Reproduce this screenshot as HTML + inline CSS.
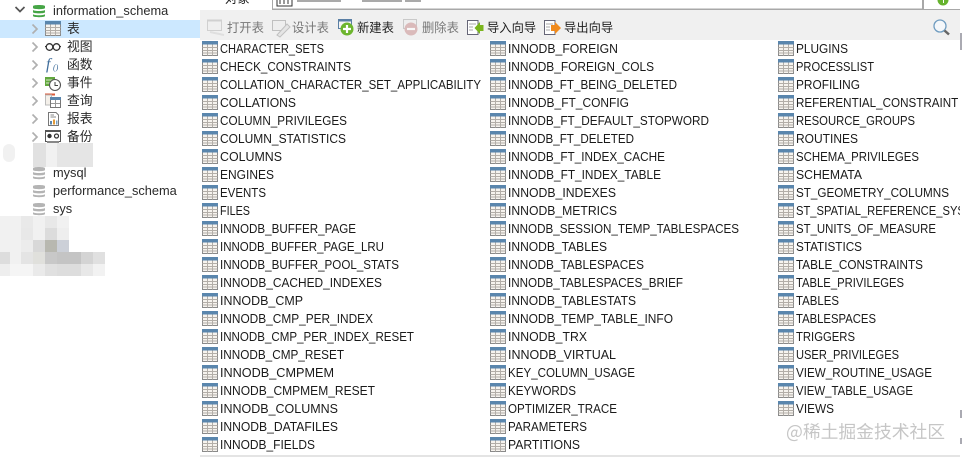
<!DOCTYPE html>
<html><head><meta charset="utf-8"><title>Navicat</title>
<style>
html,body{margin:0;padding:0;background:#fff;width:962px;height:457px;overflow:hidden}
svg{display:block}
text{font-family:"Liberation Sans","Noto Sans CJK SC",sans-serif;fill:#222}
.t text{font-size:12.8px;fill:#1a1a1a}
.s text{font-size:12.8px;fill:#2a2a2a}
.c{font-family:"Noto Sans CJK SC",sans-serif!important;font-size:12.3px}
</style></head><body>
<svg width="962" height="457" viewBox="0 0 962 457" xmlns="http://www.w3.org/2000/svg">
<defs>
<symbol id="t" viewBox="0 0 16 15" width="16" height="15">
<rect x=".5" y=".5" width="15" height="14" fill="#f6f3ee" stroke="#8a8a8a"/>
<rect x="0" y="0" width="16" height="3.5" fill="#5a86ad"/>
<path d="M.5 6.5H15.5M.5 9.5H15.5M.5 12H15.5M5.5 3.5V14.5M10.5 3.5V14.5" stroke="#b3aea8" stroke-width="1" fill="none"/>
</symbol>
<symbol id="d" viewBox="0 0 12 14" width="12" height="14">
<path d="M0 2.2C0 .6 12 .6 12 2.2V4C12 5.6 0 5.6 0 4ZM0 6C2 7.4 10 7.4 12 6V8.2C12 9.7 0 9.7 0 8.2ZM0 10.2C2 11.6 10 11.6 12 10.2V12C12 13.6 0 13.6 0 12Z" fill="currentColor"/>
</symbol>
<symbol id="a" viewBox="0 0 8 12" width="8" height="12">
<path d="M1.5 1.5L6 6L1.5 10.5" fill="none" stroke="#b0b0b0" stroke-width="1.7"/>
</symbol>
<clipPath id="cl"><rect x="0" y="0" width="960" height="457"/></clipPath>
<clipPath id="cr"><rect x="0" y="0" width="958" height="457"/></clipPath>
</defs>

<!-- top -->
<rect width="962" height="457" fill="#fff"/>
<text x="225" y="3" class="c">对象</text>
<rect x="272.500" y="-3" width="650" height="12" fill="#fff" stroke="#a8a8a8"/>
<rect x="277" y="-3" width="15" height="9" fill="#fff" stroke="#333"/>
<path d="M280 -1V4M284 -1V4M288 -1V4" stroke="#333"/>
<g fill="#aaa"><rect x="297" y="0" width="44" height="2"/><rect x="362" y="0" width="40" height="2"/><rect x="405" y="0" width="16" height="2"/></g>
<path d="M272 9.500H960" stroke="#a8a8a8"/>
<path d="M923.500 0V9" stroke="#a8a8a8"/>
<circle cx="943" cy="0" r="5.500" fill="#66b32e"/>
<rect x="943" y="0" width="1" height="3" fill="#fff"/>

<!-- toolbar -->
<rect x="200" y="10" width="760" height="30" fill="#f0f0f0"/>
<g opacity=".45">
<rect x="207.500" y="20.500" width="14" height="10" fill="#eee" stroke="#aaa"/>
<path d="M207 20.500H222" stroke="#aaa" stroke-width="2"/>
<path d="M210 32L224 35" stroke="#ccc" stroke-width="2"/>
</g>
<text x="227" y="32" class="c" style="fill:#777">打开表</text>
<g opacity=".55">
<rect x="272.500" y="20.500" width="13" height="10" fill="#eee" stroke="#999"/>
<path d="M277 35L287 24L290 27L280 37Z" fill="#ddd" stroke="#999"/>
</g>
<text x="292" y="32" class="c" style="fill:#777">设计表</text>
<rect x="338.500" y="19.500" width="13" height="9" fill="#f4f4f4" stroke="#5a7fa5"/>
<path d="M338 20.500H352" stroke="#5a7fa5" stroke-width="2"/>
<circle cx="347" cy="29" r="6.500" fill="#6db52e"/>
<path d="M343 29H351M347 25V33" stroke="#fff" stroke-width="2.200"/>
<text x="357" y="32" class="c" style="fill:#1e1e1e">新建表</text>
<g opacity=".55">
<rect x="403.500" y="19.500" width="13" height="9" fill="#eee" stroke="#aaa"/>
<circle cx="411" cy="29" r="6.500" fill="#c98f8f"/>
<path d="M407 29H415" stroke="#fff" stroke-width="2.200"/>
</g>
<text x="422" y="32" class="c" style="fill:#777">删除表</text>
<path d="M467.500 20.500H478V34.500H467.500Z" fill="#fff" stroke="#667"/>
<path d="M469 24H476M469 27H473M469 30H473" stroke="#aaa"/>
<path d="M480 22V25H483.500V31H480V34L474.500 28Z" fill="#7ab51d"/>
<text x="487" y="32" class="c" style="fill:#1e1e1e">导入向导</text>
<path d="M544.500 20.500H555V34.500H544.500Z" fill="#fff" stroke="#667"/>
<path d="M546 24H553M546 27H550M546 30H550" stroke="#aaa"/>
<path d="M555 22L561 28L555 34V31H551V25H555Z" fill="#f08a1d"/>
<text x="564" y="32" class="c" style="fill:#1e1e1e">导出向导</text>
<circle cx="940" cy="26" r="6" fill="#f4f7fa" stroke="#6f9cc0" stroke-width="1.300"/>
<path d="M944.500 30.500L949 34.500" stroke="#666" stroke-width="2.500"/>

<!-- sidebar -->
<rect x="0" y="20" width="200" height="18" fill="#cce8ff"/>
<path d="M15.500 7L20 11.500L24.500 7" fill="none" stroke="#555" stroke-width="1.700"/>
<use href="#a" x="31" y="23"/><use href="#a" x="31" y="41"/><use href="#a" x="31" y="59"/><use href="#a" x="31" y="77"/><use href="#a" x="31" y="95"/><use href="#a" x="31" y="113"/><use href="#a" x="31" y="131"/>
<use href="#d" x="33" y="4" style="color:#46a546"/>
<use href="#d" x="33" y="166" style="color:#b4b4b4"/>
<use href="#d" x="33" y="184" style="color:#b4b4b4"/>
<use href="#d" x="33" y="202" style="color:#b4b4b4"/>
<use href="#t" x="45" y="21"/>
<circle cx="49.500" cy="47" r="3.300" fill="none" stroke="#333" stroke-width="1.300"/>
<circle cx="56.500" cy="47" r="3.300" fill="none" stroke="#333" stroke-width="1.300"/>
<path d="M45 46.500H46M53 46.500H53.500M60 46.500H61" stroke="#333"/>
<text x="46" y="69" style="font-family:'Liberation Serif',serif;font-style:italic;font-size:16px;fill:#3f6d9b">f</text>
<text x="53" y="70" style="font-family:'Liberation Serif',serif;font-style:italic;font-size:8px;fill:#3f6d9b">()</text>
<path d="M45 77H55V86H45Z" fill="#62a83e"/>
<path d="M46 80H54M46 83H54" stroke="#d6e8c6"/>
<circle cx="55" cy="85" r="5.500" fill="#fff" stroke="#555" stroke-width="1.100"/>
<path d="M55 82V85.500H58" fill="none" stroke="#444"/>
<path d="M45 94.500H55" stroke="#d95a3a" stroke-width="2"/>
<rect x="45.500" y="95" width="6" height="10" fill="#f4f0ea" stroke="#bbb"/>
<rect x="50.500" y="97.500" width="10" height="10" fill="#fff" stroke="#777"/>
<rect x="50" y="97" width="11" height="3" fill="#5a86ad"/>
<path d="M55.500 100V107M51 103.500H60" stroke="#999"/>
<path d="M48.500 112.500H56L58.500 115V125.500H48.500Z" fill="#fff" stroke="#777"/>
<path d="M50.500 115H54M50.500 117H56" stroke="#888"/>
<rect x="50" y="121" width="2" height="3.500" fill="#5a86ad"/><rect x="53" y="119.500" width="2" height="5" fill="#e09a3a"/><rect x="56" y="120.500" width="1.500" height="4" fill="#7aa0c0"/>
<rect x="45.500" y="130.500" width="15" height="11" fill="#fff" stroke="#555"/>
<rect x="45" y="130" width="16" height="2" fill="#555"/>
<circle cx="49.500" cy="136" r="2.200" fill="#333"/><circle cx="56.500" cy="136" r="2" fill="none" stroke="#333" stroke-width="1.200"/>
<rect x="47" y="141" width="12" height="2.500" fill="#888"/>

<g class="s">
<text x="53" y="15">information_schema</text>
<text x="53" y="177">mysql</text>
<text x="53" y="195">performance_schema</text>
<text x="53" y="213">sys</text>
<text x="67" y="33" class="c">表</text>
<text x="67" y="51" class="c">视图</text>
<text x="67" y="69" class="c">函数</text>
<text x="67" y="87" class="c">事件</text>
<text x="67" y="105" class="c">查询</text>
<text x="67" y="123" class="c">报表</text>
<text x="67" y="141" class="c">备份</text>
</g>

<!-- mosaic -->
<rect x="33" y="143" width="13" height="24" fill="#e1e1e1"/><rect x="46" y="143" width="11" height="24" fill="#f1f1f1"/><rect x="57" y="143" width="36" height="24" fill="#e5e5e5"/>
<rect x="3" y="144" width="12" height="18" rx="6" fill="#f1f1f1"/>
<path d="M0 216H21V276H0Z" fill="#f1f1f1"/>
<rect x="21" y="216" width="12" height="12" fill="#e9e9e9"/><rect x="33" y="216" width="12" height="12" fill="#f1f1f1"/><rect x="45" y="216" width="12" height="12" fill="#e8e8e8"/><rect x="57" y="216" width="12" height="12" fill="#f1f1f1"/>
<rect x="21" y="228" width="12" height="12" fill="#e8e8e8"/><rect x="33" y="228" width="12" height="12" fill="#f1f1f1"/><rect x="45" y="228" width="12" height="12" fill="#dcdcdc"/><rect x="57" y="228" width="12" height="12" fill="#eee"/>
<rect x="21" y="240" width="12" height="12" fill="#ececec"/><rect x="33" y="240" width="12" height="12" fill="#d8d8d8"/><rect x="45" y="240" width="12" height="12" fill="#b8b8b0"/><rect x="57" y="240" width="12" height="12" fill="#ccd0d8"/>
<rect x="0" y="252" width="10" height="12" fill="#ddd"/><rect x="10" y="252" width="11" height="12" fill="#f1f1f1"/><rect x="21" y="252" width="12" height="12" fill="#e4e4e4"/><rect x="33" y="252" width="12" height="12" fill="#e0e0dc"/><rect x="45" y="252" width="12" height="12" fill="#c8c8c8"/><rect x="57" y="252" width="24" height="12" fill="#c4c4c4"/><rect x="81" y="252" width="12" height="12" fill="#d4d4d4"/><rect x="93" y="252" width="12" height="12" fill="#e0e0e0"/>
<rect x="0" y="264" width="10" height="12" fill="#eee"/><rect x="10" y="264" width="23" height="12" fill="#f5f5f5"/><rect x="33" y="264" width="12" height="12" fill="#eaeaea"/><rect x="45" y="264" width="12" height="12" fill="#e0e0e0"/><rect x="57" y="264" width="24" height="12" fill="#ddd"/><rect x="81" y="264" width="12" height="12" fill="#e8e8e8"/><rect x="93" y="264" width="12" height="12" fill="#f2f2f2"/>

<!-- icons col 1 -->
<use href="#t" x="202" y="41"/><use href="#t" x="202" y="59"/><use href="#t" x="202" y="77"/><use href="#t" x="202" y="95"/><use href="#t" x="202" y="113"/><use href="#t" x="202" y="131"/><use href="#t" x="202" y="149"/><use href="#t" x="202" y="167"/><use href="#t" x="202" y="185"/><use href="#t" x="202" y="203"/><use href="#t" x="202" y="221"/><use href="#t" x="202" y="239"/><use href="#t" x="202" y="257"/><use href="#t" x="202" y="275"/><use href="#t" x="202" y="293"/><use href="#t" x="202" y="311"/><use href="#t" x="202" y="329"/><use href="#t" x="202" y="347"/><use href="#t" x="202" y="365"/><use href="#t" x="202" y="383"/><use href="#t" x="202" y="401"/><use href="#t" x="202" y="419"/><use href="#t" x="202" y="437"/>
<!-- icons col 2 -->
<use href="#t" x="490" y="41"/><use href="#t" x="490" y="59"/><use href="#t" x="490" y="77"/><use href="#t" x="490" y="95"/><use href="#t" x="490" y="113"/><use href="#t" x="490" y="131"/><use href="#t" x="490" y="149"/><use href="#t" x="490" y="167"/><use href="#t" x="490" y="185"/><use href="#t" x="490" y="203"/><use href="#t" x="490" y="221"/><use href="#t" x="490" y="239"/><use href="#t" x="490" y="257"/><use href="#t" x="490" y="275"/><use href="#t" x="490" y="293"/><use href="#t" x="490" y="311"/><use href="#t" x="490" y="329"/><use href="#t" x="490" y="347"/><use href="#t" x="490" y="365"/><use href="#t" x="490" y="383"/><use href="#t" x="490" y="401"/><use href="#t" x="490" y="419"/><use href="#t" x="490" y="437"/>
<!-- icons col 3 -->
<use href="#t" x="778" y="41"/><use href="#t" x="778" y="59"/><use href="#t" x="778" y="77"/><use href="#t" x="778" y="95"/><use href="#t" x="778" y="113"/><use href="#t" x="778" y="131"/><use href="#t" x="778" y="149"/><use href="#t" x="778" y="167"/><use href="#t" x="778" y="185"/><use href="#t" x="778" y="203"/><use href="#t" x="778" y="221"/><use href="#t" x="778" y="239"/><use href="#t" x="778" y="257"/><use href="#t" x="778" y="275"/><use href="#t" x="778" y="293"/><use href="#t" x="778" y="311"/><use href="#t" x="778" y="329"/><use href="#t" x="778" y="347"/><use href="#t" x="778" y="365"/><use href="#t" x="778" y="383"/><use href="#t" x="778" y="401"/>

<g class="t">
<text x="220" y="53" lengthAdjust="spacingAndGlyphs" textLength="104">CHARACTER_SETS</text>
<text x="220" y="71" lengthAdjust="spacingAndGlyphs" textLength="131">CHECK_CONSTRAINTS</text>
<text x="220" y="89" lengthAdjust="spacingAndGlyphs" textLength="261">COLLATION_CHARACTER_SET_APPLICABILITY</text>
<text x="220" y="107" lengthAdjust="spacingAndGlyphs" textLength="76">COLLATIONS</text>
<text x="220" y="125" lengthAdjust="spacingAndGlyphs" textLength="127">COLUMN_PRIVILEGES</text>
<text x="220" y="143" lengthAdjust="spacingAndGlyphs" textLength="126">COLUMN_STATISTICS</text>
<text x="220" y="161" lengthAdjust="spacingAndGlyphs" textLength="62">COLUMNS</text>
<text x="220" y="179" lengthAdjust="spacingAndGlyphs" textLength="54">ENGINES</text>
<text x="220" y="197" lengthAdjust="spacingAndGlyphs" textLength="46">EVENTS</text>
<text x="220" y="215" lengthAdjust="spacingAndGlyphs" textLength="30">FILES</text>
<text x="220" y="233" lengthAdjust="spacingAndGlyphs" textLength="136">INNODB_BUFFER_PAGE</text>
<text x="220" y="251" lengthAdjust="spacingAndGlyphs" textLength="164">INNODB_BUFFER_PAGE_LRU</text>
<text x="220" y="269" lengthAdjust="spacingAndGlyphs" textLength="179">INNODB_BUFFER_POOL_STATS</text>
<text x="220" y="287" lengthAdjust="spacingAndGlyphs" textLength="162">INNODB_CACHED_INDEXES</text>
<text x="220" y="305" lengthAdjust="spacingAndGlyphs" textLength="83">INNODB_CMP</text>
<text x="220" y="323" lengthAdjust="spacingAndGlyphs" textLength="153">INNODB_CMP_PER_INDEX</text>
<text x="220" y="341" lengthAdjust="spacingAndGlyphs" textLength="194">INNODB_CMP_PER_INDEX_RESET</text>
<text x="220" y="359" lengthAdjust="spacingAndGlyphs" textLength="124">INNODB_CMP_RESET</text>
<text x="220" y="377" lengthAdjust="spacingAndGlyphs" textLength="114">INNODB_CMPMEM</text>
<text x="220" y="395" lengthAdjust="spacingAndGlyphs" textLength="155">INNODB_CMPMEM_RESET</text>
<text x="220" y="413" lengthAdjust="spacingAndGlyphs" textLength="118">INNODB_COLUMNS</text>
<text x="220" y="431" lengthAdjust="spacingAndGlyphs" textLength="118">INNODB_DATAFILES</text>
<text x="220" y="449" lengthAdjust="spacingAndGlyphs" textLength="95">INNODB_FIELDS</text>
</g>
<g class="t">
<text x="508" y="53" lengthAdjust="spacingAndGlyphs" textLength="110">INNODB_FOREIGN</text>
<text x="508" y="71" lengthAdjust="spacingAndGlyphs" textLength="146">INNODB_FOREIGN_COLS</text>
<text x="508" y="89" lengthAdjust="spacingAndGlyphs" textLength="169">INNODB_FT_BEING_DELETED</text>
<text x="508" y="107" lengthAdjust="spacingAndGlyphs" textLength="121">INNODB_FT_CONFIG</text>
<text x="508" y="125" lengthAdjust="spacingAndGlyphs" textLength="201">INNODB_FT_DEFAULT_STOPWORD</text>
<text x="508" y="143" lengthAdjust="spacingAndGlyphs" textLength="126">INNODB_FT_DELETED</text>
<text x="508" y="161" lengthAdjust="spacingAndGlyphs" textLength="157">INNODB_FT_INDEX_CACHE</text>
<text x="508" y="179" lengthAdjust="spacingAndGlyphs" textLength="153">INNODB_FT_INDEX_TABLE</text>
<text x="508" y="197" lengthAdjust="spacingAndGlyphs" textLength="108">INNODB_INDEXES</text>
<text x="508" y="215" lengthAdjust="spacingAndGlyphs" textLength="109">INNODB_METRICS</text>
<text x="508" y="233" lengthAdjust="spacingAndGlyphs" textLength="231">INNODB_SESSION_TEMP_TABLESPACES</text>
<text x="508" y="251" lengthAdjust="spacingAndGlyphs" textLength="99">INNODB_TABLES</text>
<text x="508" y="269" lengthAdjust="spacingAndGlyphs" textLength="136">INNODB_TABLESPACES</text>
<text x="508" y="287" lengthAdjust="spacingAndGlyphs" textLength="175">INNODB_TABLESPACES_BRIEF</text>
<text x="508" y="305" lengthAdjust="spacingAndGlyphs" textLength="128">INNODB_TABLESTATS</text>
<text x="508" y="323" lengthAdjust="spacingAndGlyphs" textLength="165">INNODB_TEMP_TABLE_INFO</text>
<text x="508" y="341" lengthAdjust="spacingAndGlyphs" textLength="79">INNODB_TRX</text>
<text x="508" y="359" lengthAdjust="spacingAndGlyphs" textLength="108">INNODB_VIRTUAL</text>
<text x="508" y="377" lengthAdjust="spacingAndGlyphs" textLength="127">KEY_COLUMN_USAGE</text>
<text x="508" y="395" lengthAdjust="spacingAndGlyphs" textLength="68">KEYWORDS</text>
<text x="508" y="413" lengthAdjust="spacingAndGlyphs" textLength="109">OPTIMIZER_TRACE</text>
<text x="508" y="431" lengthAdjust="spacingAndGlyphs" textLength="79">PARAMETERS</text>
<text x="508" y="449" lengthAdjust="spacingAndGlyphs" textLength="72">PARTITIONS</text>
</g>
<g clip-path="url(#cr)" class="t"><text x="796" y="107" lengthAdjust="spacingAndGlyphs" textLength="170">REFERENTIAL_CONSTRAINTS</text></g>
<g clip-path="url(#cl)"><g class="t">
<text x="796" y="53" lengthAdjust="spacingAndGlyphs" textLength="52">PLUGINS</text>
<text x="796" y="71" lengthAdjust="spacingAndGlyphs" textLength="78">PROCESSLIST</text>
<text x="796" y="89" lengthAdjust="spacingAndGlyphs" textLength="64">PROFILING</text>
<text x="796" y="125" lengthAdjust="spacingAndGlyphs" textLength="119">RESOURCE_GROUPS</text>
<text x="796" y="143" lengthAdjust="spacingAndGlyphs" textLength="62">ROUTINES</text>
<text x="796" y="161" lengthAdjust="spacingAndGlyphs" textLength="123">SCHEMA_PRIVILEGES</text>
<text x="796" y="179" lengthAdjust="spacingAndGlyphs" textLength="66">SCHEMATA</text>
<text x="796" y="197" lengthAdjust="spacingAndGlyphs" textLength="153">ST_GEOMETRY_COLUMNS</text>
<text x="796" y="215" lengthAdjust="spacingAndGlyphs" textLength="200">ST_SPATIAL_REFERENCE_SYSTEMS</text>
<text x="796" y="233" lengthAdjust="spacingAndGlyphs" textLength="140">ST_UNITS_OF_MEASURE</text>
<text x="796" y="251" lengthAdjust="spacingAndGlyphs" textLength="66">STATISTICS</text>
<text x="796" y="269" lengthAdjust="spacingAndGlyphs" textLength="127">TABLE_CONSTRAINTS</text>
<text x="796" y="287" lengthAdjust="spacingAndGlyphs" textLength="108">TABLE_PRIVILEGES</text>
<text x="796" y="305" lengthAdjust="spacingAndGlyphs" textLength="43">TABLES</text>
<text x="796" y="323" lengthAdjust="spacingAndGlyphs" textLength="80">TABLESPACES</text>
<text x="796" y="341" lengthAdjust="spacingAndGlyphs" textLength="59">TRIGGERS</text>
<text x="796" y="359" lengthAdjust="spacingAndGlyphs" textLength="103">USER_PRIVILEGES</text>
<text x="796" y="377" lengthAdjust="spacingAndGlyphs" textLength="136">VIEW_ROUTINE_USAGE</text>
<text x="796" y="395" lengthAdjust="spacingAndGlyphs" textLength="117">VIEW_TABLE_USAGE</text>
<text x="796" y="413" lengthAdjust="spacingAndGlyphs" textLength="38">VIEWS</text>
</g></g>

<text x="786" y="438" style="font-family:'Noto Sans CJK SC',sans-serif;font-size:17.800px;letter-spacing:0;fill:#c6c6c6">@稀土掘金技术社区</text>
<rect x="200" y="455" width="760" height="2" fill="#e4e4e4"/>
<path d="M961 33V50M961 410V418M961 438V444" stroke="#445" stroke-width="1.500" opacity=".6"/>
</svg>
</body></html>
